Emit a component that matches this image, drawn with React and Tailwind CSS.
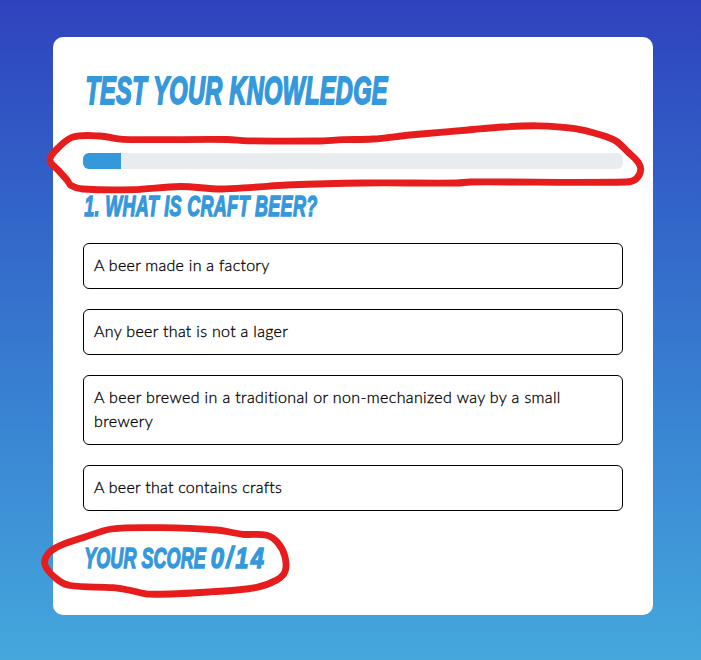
import React from "react";

const options = [
  { text: "A beer made in a factory", tracking: "tracking-[0.27px]" },
  { text: "Any beer that is not a lager", tracking: "tracking-[0.31px]" },
  {
    text: "A beer brewed in a traditional or non-mechanized way by a small brewery",
    tracking: "tracking-[0.37px]",
  },
  { text: "A beer that contains crafts", tracking: "tracking-[0.25px]" },
];

const progressLoop = [
  [50, 160], [58, 148], [73, 137], [100, 136], [123, 139.3], [227, 139.5], [247, 140.8], [317, 141],
  [343, 139.7], [373, 139], [410, 135], [468, 130], [503, 127], [538, 125.8], [575, 128.7], [601, 135],
  [616, 141], [628, 152], [638, 162], [640.7, 170], [636, 179], [626, 182], [470, 182], [457, 183],
  [363, 183], [287, 185], [253, 187.3], [220, 189], [180, 186.5], [133, 189.7], [83, 189], [71, 185.5],
  [67, 180], [59, 171],
];

const scoreLoop = [
  [45, 565], [48, 554], [60, 545.7], [85, 537], [111.7, 529], [160, 527.7], [216.7, 530], [243, 534.3],
  [266.7, 535.3], [278, 543], [285, 556.7], [285, 571.7], [276.7, 580], [256.7, 587.3], [213, 591.7],
  [150, 594.2], [130, 590.3], [113, 587.7], [70, 585.5], [56.7, 579],
];

// Closed Catmull-Rom curve through the given points.
function smoothLoop(points) {
  const n = points.length;
  const at = (i) => points[(i + n) % n];
  let d = `M${points[0][0]} ${points[0][1]}`;
  for (let i = 0; i < n; i++) {
    const [a, b, c, e] = [at(i - 1), at(i), at(i + 1), at(i + 2)];
    const len = Math.hypot(c[0] - b[0], c[1] - b[1]);
    const k1 = len / (Math.hypot(c[0] - a[0], c[1] - a[1]) || 1) / 3;
    const k2 = len / (Math.hypot(e[0] - b[0], e[1] - b[1]) || 1) / 3;
    d += `C${b[0] + (c[0] - a[0]) * k1} ${b[1] + (c[1] - a[1]) * k1} ${c[0] - (e[0] - b[0]) * k2} ${c[1] - (e[1] - b[1]) * k2} ${c[0]} ${c[1]}`;
  }
  return d + "Z";
}

function Comic({ as: Tag, className, children }) {
  return (
    <Tag className={`w-max origin-left whitespace-nowrap font-['Liberation_Sans',sans-serif] font-bold italic uppercase text-[#3498db] ${className}`}>
      {children}
    </Tag>
  );
}

export default function App() {
  return (
    <div className="relative h-[660px] w-[701px] overflow-hidden bg-linear-to-b from-[#2f42be] to-[#45a7dc] pl-[53px] pt-[37px]">
      <main className="flex h-[578px] w-[600px] flex-col rounded-[10px] bg-white p-[30px]">
        <Comic as="h1" className="h-12 scale-x-[0.604] pl-1 text-[39px] leading-[48px] tracking-[0.5px] [-webkit-text-stroke:1.9px_#3498db]">
          Test your knowledge
        </Comic>
        <div className="mt-[38px] h-4 shrink-0 overflow-hidden rounded-[6px] bg-[#e8ecef]">
          <div className="h-full w-[38px] bg-[#3498db]" />
        </div>
        <Comic as="h2" className="mt-5 h-[34px] scale-x-[0.62] pl-0.5 text-[29px] leading-[34px] tracking-[0.5px] [-webkit-text-stroke:1.4px_#3498db]">
          1. What is craft beer?
        </Comic>
        <ul className="mt-5 flex flex-col gap-5">
          {options.map((o) => (
            <li
              key={o.text}
              className={`rounded-[6px] border border-black px-2.5 pb-[11px] pt-[9px] font-['Lato',sans-serif] text-base font-light leading-6 text-black [-webkit-text-stroke:0.3px_#000] ${o.tracking}`}
            >
              {o.text}
            </li>
          ))}
        </ul>
        <Comic as="h2" className="mt-[30px] h-[34px] scale-x-[0.62] pl-0.5 text-[29px] leading-[34px] tracking-[0.1px] [-webkit-text-stroke:1.4px_#3498db]">
          Your score <span className="inline-block origin-left scale-x-[1.32] tracking-[2.9px]">0/14</span>
        </Comic>
      </main>
      <svg
        className="pointer-events-none absolute inset-0"
        width="701"
        height="660"
        fill="none"
        stroke="#e71c1c"
        strokeWidth="6.8"
        strokeLinejoin="round"
      >
        <path d={smoothLoop(progressLoop)} />
        <path d={smoothLoop(scoreLoop)} />
      </svg>
    </div>
  );
}
